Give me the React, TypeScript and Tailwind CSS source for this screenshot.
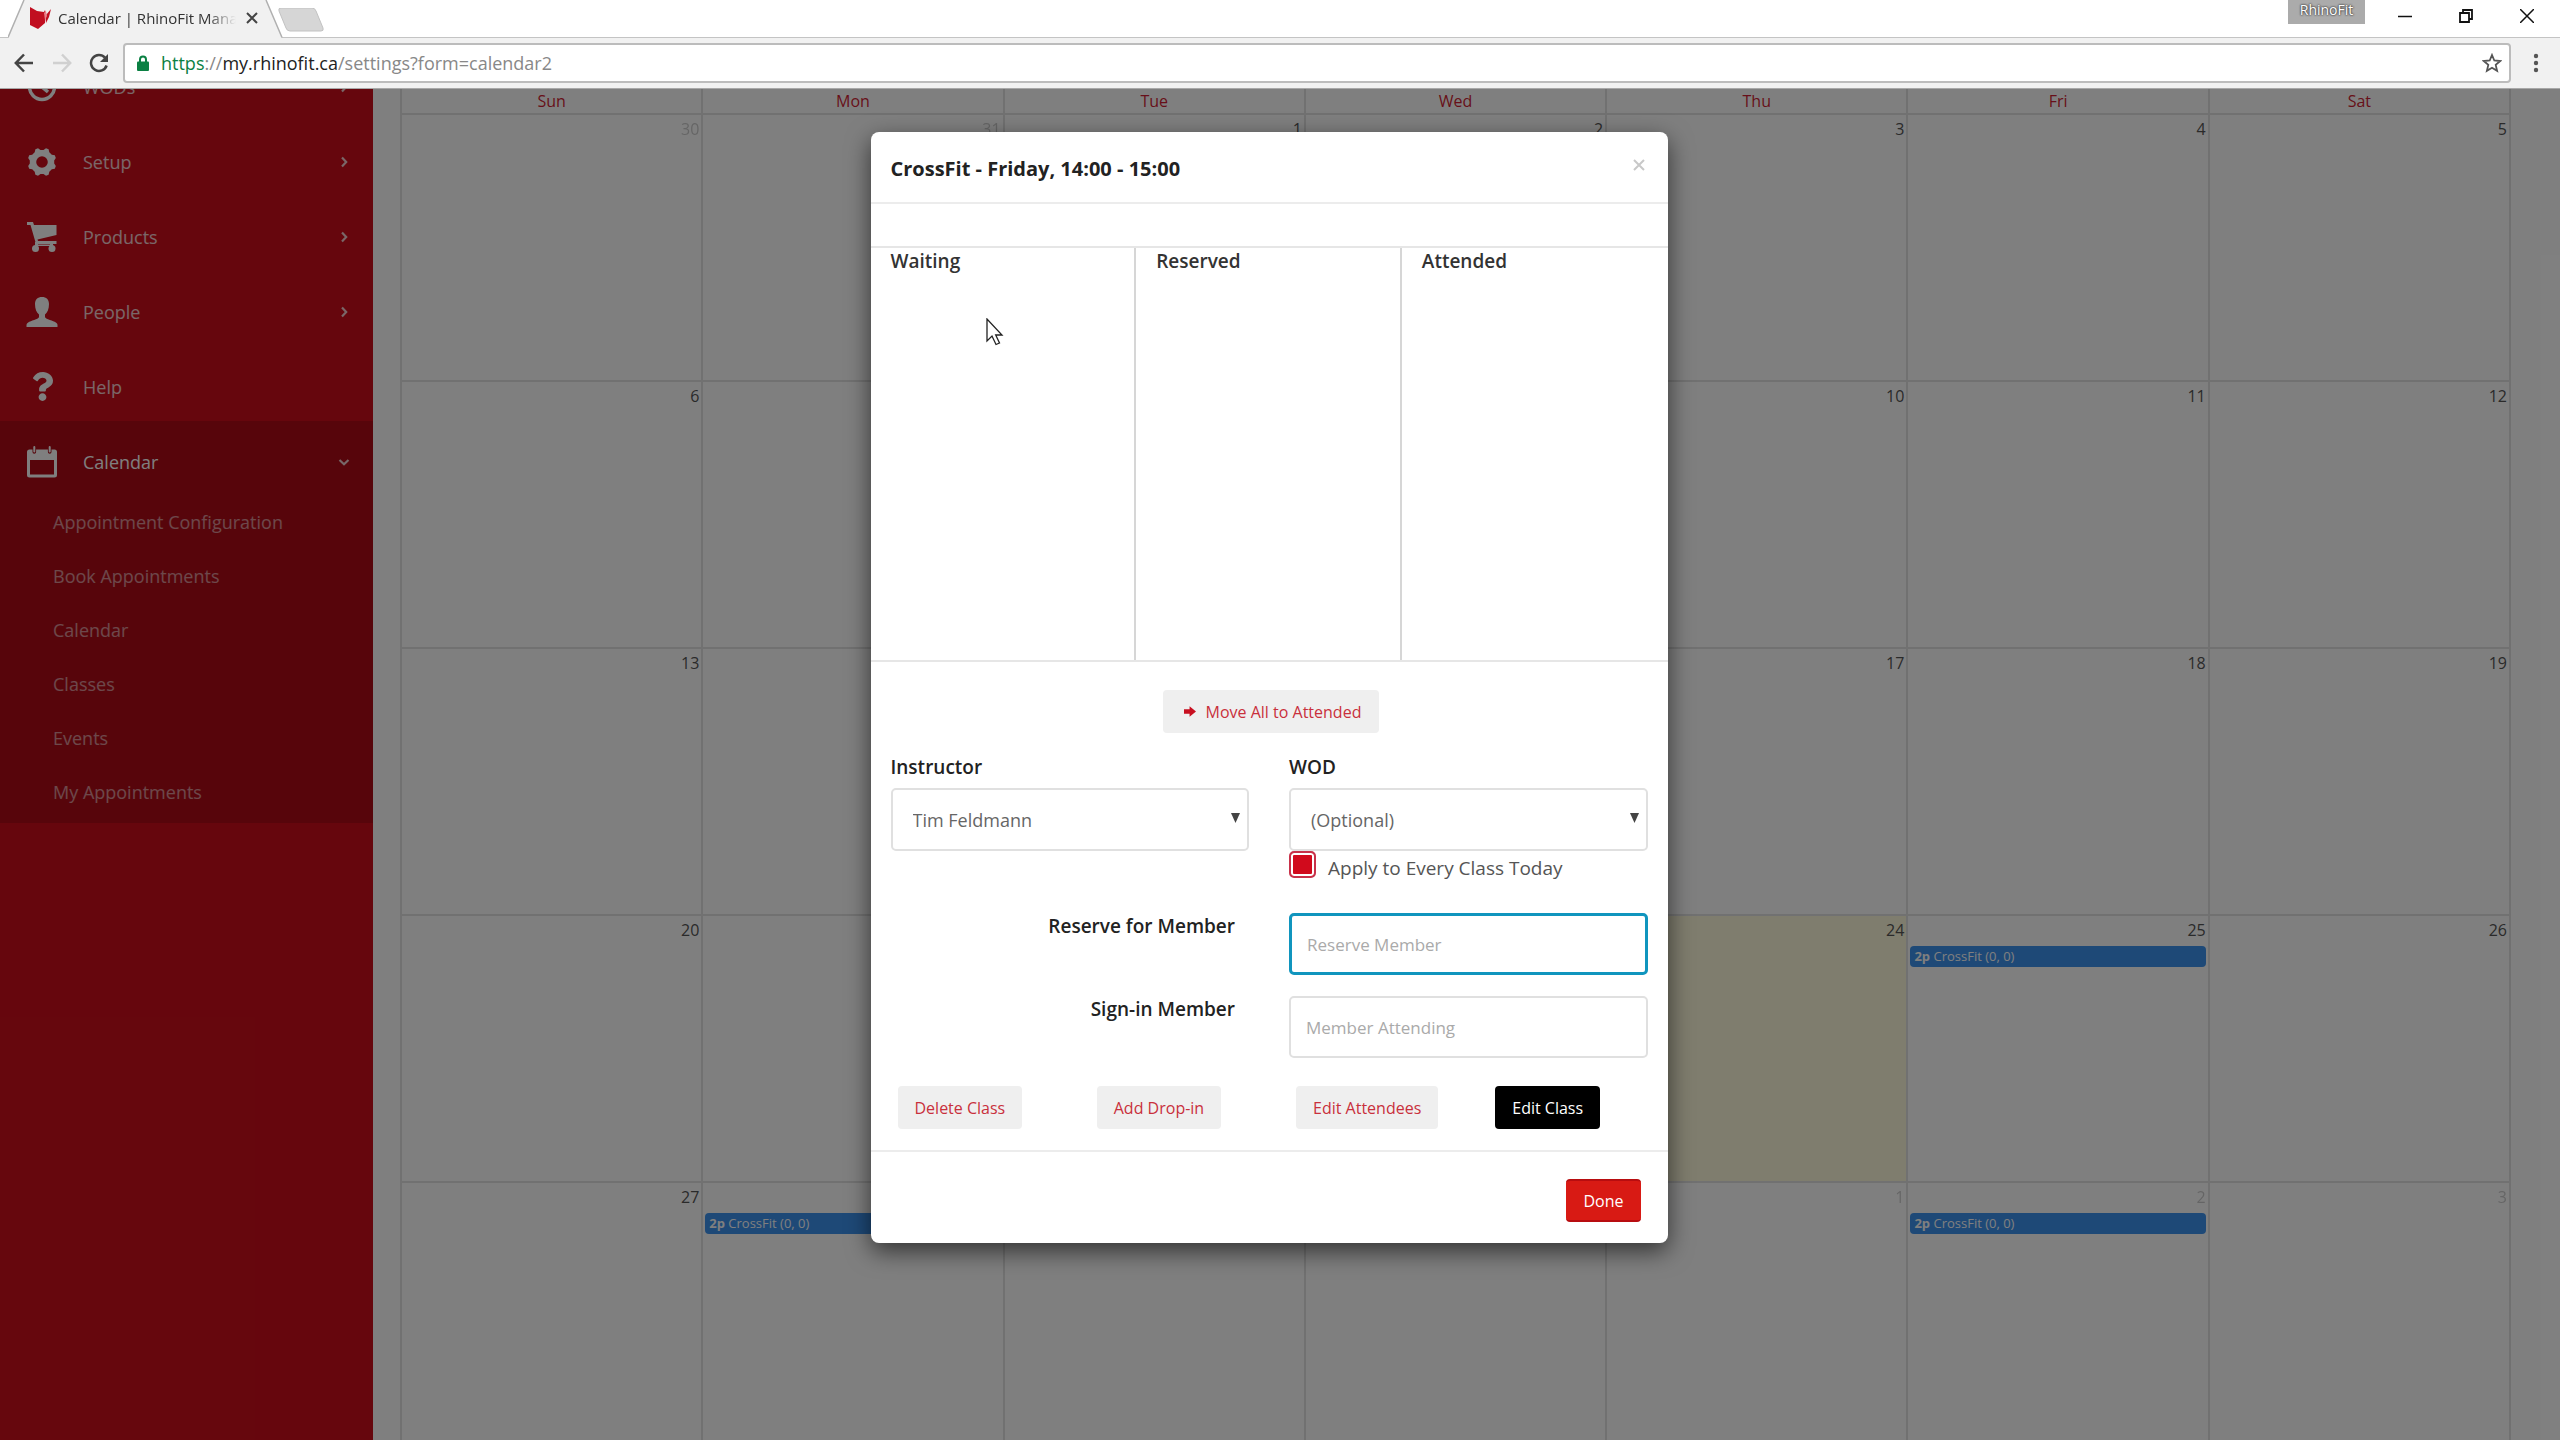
import { FaQuestion } from 'react-icons/fa';

type NavItem = { label: string; icon: React.ReactNode; arrow?: boolean };

const navItems: NavItem[] = [
  { label: 'WODs', icon: <ClockIcon />, arrow: true },
  { label: 'Setup', icon: <CogIcon />, arrow: true },
  { label: 'Products', icon: <CartIcon />, arrow: true },
  { label: 'People', icon: <UserIcon />, arrow: true },
  { label: 'Help', icon: <FaQuestion size={29} /> },
];

const calendarLinks = [
  'Appointment Configuration',
  'Book Appointments',
  'Calendar',
  'Classes',
  'Events',
  'My Appointments',
];

const weekdays = ['Sun', 'Mon', 'Tue', 'Wed', 'Thu', 'Fri', 'Sat'];

type Day = { n: number; other?: boolean; today?: boolean; event?: boolean };

const weeks: Day[][] = [
  [{ n: 30, other: true }, { n: 31, other: true }, { n: 1 }, { n: 2 }, { n: 3 }, { n: 4 }, { n: 5 }],
  [{ n: 6 }, { n: 7 }, { n: 8 }, { n: 9 }, { n: 10 }, { n: 11 }, { n: 12 }],
  [{ n: 13 }, { n: 14 }, { n: 15 }, { n: 16 }, { n: 17 }, { n: 18 }, { n: 19 }],
  [{ n: 20 }, { n: 21 }, { n: 22 }, { n: 23 }, { n: 24, today: true }, { n: 25, event: true }, { n: 26 }],
  [
    { n: 27 },
    { n: 28, event: true },
    { n: 29 },
    { n: 30 },
    { n: 1, other: true },
    { n: 2, other: true, event: true },
    { n: 3, other: true },
  ],
];

function ClockIcon() {
  return (
    <svg width="30" height="30" viewBox="0 0 30 30" fill="none" stroke="currentColor" strokeWidth="3.5">
      <circle cx="15" cy="15" r="12.5" />
      <path d="M15 6v9l6 5" />
    </svg>
  );
}

function CogIcon() {
  return (
    <svg width="30" height="30" viewBox="0 0 30 30" fill="currentColor">
      <path
        fillRule="evenodd"
        d="M11 1.300L13.500 3h3L19 1.300l2.600 1L22.300 5.200 24.800 7.700l3 .6 1 2.700L27.200 13.500v3L28.800 19l-1 2.700-3 .6-2.500 2.500-.7 2.900-2.600 1L16.500 27h-3L11 28.700l-2.600-1-.7-2.900-2.500-2.500-3-.6-1-2.700 1.600-2.500v-3L1.200 11l1-2.700 3-.6 2.500-2.500.7-2.900zM15 9.200a5.800 5.800 0 1 0 0 11.600 5.800 5.800 0 0 0 0-11.600z"
      />
    </svg>
  );
}

function CartIcon() {
  return (
    <svg width="32" height="32" viewBox="0 0 32 32" fill="currentColor">
      <path d="M1 1h6l1 3h22.500v10L11.500 18.500l.5 1.500h18.500v3H10L4.500 4H1z" />
      <path d="M9 21h3v4H9zM24 21h3v4h-3zM10 23.500h16v1.500H10z" />
      <circle cx="9.500" cy="27.500" r="3.500" />
      <circle cx="26" cy="27.500" r="3.500" />
    </svg>
  );
}

function UserIcon() {
  return (
    <svg width="32" height="30" viewBox="0 0 32 30" fill="currentColor">
      <path d="M16 0c-4.300 0-7 2.500-7 7 0 5 1.600 8.600 4 10.500v2.200c0 1-1 1.700-3 2.500C5 24 .5 25.200.5 28v2h31v-2c0-2.800-4.500-4-9.500-5.800-2-.8-3-1.500-3-2.500v-2.200C21.400 15.600 23 12 23 7c0-4.500-2.700-7-7-7z" />
    </svg>
  );
}

function CalendarIcon() {
  return (
    <svg width="30" height="32" viewBox="0 0 30 32" fill="currentColor">
      <path
        fillRule="evenodd"
        d="M2.500 3.500H5.500V6a1.800 1.800 0 0 0 3.600 0V3.500h11.800V6a1.800 1.800 0 0 0 3.600 0V3.500h3A2.500 2.500 0 0 1 30 6v23a2.500 2.500 0 0 1-2.500 2.500h-25A2.500 2.500 0 0 1 0 29V6a2.500 2.500 0 0 1 2.500-2.500zM3 14v14.500h24V14z"
      />
      <rect x="6.300" y="0" width="2" height="6.500" rx="1" />
      <rect x="21.700" y="0" width="2" height="6.500" rx="1" />
    </svg>
  );
}

function Chevron({ down }: { down?: boolean }) {
  return (
    <svg width="12" height="12" viewBox="0 0 12 12" fill="none" stroke="currentColor" strokeOpacity="0.8" strokeWidth="2.200">
      <path d={down ? 'M1.500 4l4.500 4.200L10.500 4' : 'M4 1.500L8.200 6 4 10.500'} />
    </svg>
  );
}

function BrowserBar() {
  return (
    <header className="relative z-10 border-b border-[#a8a8a8] bg-[#f1f1f1] text-[#333]">
      <div className="flex h-[38px] items-start border-b border-[#c4c4c4] bg-white pl-2">
        <div className="relative h-[38px] w-[276px]">
          <svg className="absolute inset-0" width="276" height="38" viewBox="0 0 276 38">
            <path d="M0 38L16 0h242l16 38z" fill="#f1f1f1" />
            <path d="M0 37.500L16 0M258 0l16 37.500" fill="none" stroke="#b0b0b0" strokeWidth="1.500" />
          </svg>
          <div className="relative flex h-9 items-center pl-[21px]">
            <svg width="22" height="22" viewBox="0 0 22 22">
              <path d="M1 0l7 4 7 1 1-2 1 4-1 9-7 6-8-4z" fill="#c10e20" />
              <path d="M17 8l5-6-2 8-3 6z" fill="#c10e20" />
              <path d="M15 6l2-2 1 5-2 4z" fill="#e9808a" />
            </svg>
            <span className="ml-[7px] w-[178px] text-[15px] whitespace-nowrap [mask-image:linear-gradient(90deg,#000_84%,transparent)]">
              Calendar | RhinoFit Mana
            </span>
            <button aria-label="Close tab" className="ml-[10px]">
              <svg width="12" height="12" viewBox="0 0 12 12" stroke="#444" strokeWidth="2">
                <path d="M1 1l10 10M11 1L1 11" />
              </svg>
            </button>
          </div>
        </div>
        <button aria-label="New tab" className="mt-2 -ml-[6px]">
          <svg width="46" height="24" viewBox="0 0 46 24">
            <path d="M3 0h31q3 0 4 3l7 17q1 3-2 3H12q-3 0-4-3L1 3q-1-3 2-3z" fill="#d6d6d6" stroke="#c2c2c2" />
          </svg>
        </button>
        <div className="ml-auto flex items-start">
          <span className="flex h-6 w-[77px] items-center justify-center bg-[#ababab] pb-1 text-sm leading-5 text-white [text-shadow:0_0_2px_#333,0_0_2px_#333]">
            RhinoFit
          </span>
          <div className="flex h-8 items-center gap-[47px] pr-[26px] pl-[33px]">
            <button aria-label="Minimize">
              <svg width="14" height="14" viewBox="0 0 14 14" stroke="#111" strokeWidth="1.500">
                <path d="M0 7.500h14" />
              </svg>
            </button>
            <button aria-label="Restore">
              <svg width="14" height="14" viewBox="0 0 14 14" fill="none" stroke="#111" strokeWidth="1.800">
                <path d="M1 4h9v9H1zM4 4V1h9v9h-3" />
              </svg>
            </button>
            <button aria-label="Close">
              <svg width="14" height="14" viewBox="0 0 14 14" stroke="#111" strokeWidth="1.500">
                <path d="M0 0l14 14M14 0L0 14" />
              </svg>
            </button>
          </div>
        </div>
      </div>
      <div className="flex h-[50px] items-center pl-[14px]">
        <button aria-label="Back">
          <svg width="20" height="20" viewBox="0 0 20 20" fill="none" stroke="#444" strokeWidth="2.500">
            <path d="M19 10H2M10 1.500L1.800 10l8.200 8.500" />
          </svg>
        </button>
        <button aria-label="Forward" className="ml-[18px]">
          <svg width="20" height="20" viewBox="0 0 20 20" fill="none" stroke="#d0d0d0" strokeWidth="2.500">
            <path d="M1 10h17M10 1.500l8.200 8.500-8.200 8.500" />
          </svg>
        </button>
        <button aria-label="Reload" className="ml-[17px]">
          <svg width="20" height="20" viewBox="0 0 20 20" fill="none" stroke="#444" strokeWidth="2.500">
            <path d="M17.600 12.500A8 8 0 1 1 16 4.600" />
            <path d="M19 1v8h-8z" fill="#444" stroke="none" />
          </svg>
        </button>
        <div className="ml-[14px] flex h-10 flex-1 items-center rounded-[4px] border-2 border-[#bcbcbc] bg-white pr-[7px] pl-3">
          <svg width="12" height="16" viewBox="0 0 12 16">
            <path d="M3 8V4.500a3 3 0 0 1 6 0V8" fill="none" stroke="#0b8043" strokeWidth="2" />
            <rect y="6.500" width="12" height="9.500" rx="1" fill="#0b8043" />
          </svg>
          <span className="ml-3 flex-1 text-lg text-[#888]">
            <span className="text-[#0b8043]">https</span>://<span className="text-[#222]">my.rhinofit.ca</span>
            /settings?form=calendar2
          </span>
          <button aria-label="Bookmark">
            <svg width="20" height="20" viewBox="0 0 20 20" fill="none" stroke="#555" strokeWidth="1.800">
              <path d="M10 2l2.300 5.500 5.900.5-4.500 3.900 1.400 5.900L10 14.700l-5.100 3.100 1.400-5.900L1.800 8l5.900-.5z" />
            </svg>
          </button>
        </div>
        <button aria-label="Menu" className="mr-[21px] ml-[22px]">
          <svg width="6" height="20" viewBox="0 0 6 20" fill="#555">
            <circle cx="3" cy="3" r="2.200" />
            <circle cx="3" cy="10" r="2.200" />
            <circle cx="3" cy="17" r="2.200" />
          </svg>
        </button>
      </div>
    </header>
  );
}

function Sidebar() {
  return (
    <nav className="w-[373px] shrink-0 overflow-hidden bg-[#cc0d1a] text-lg text-white">
      <div className="-mt-[43px]">
        {navItems.map((it) => (
          <a key={it.label} href="#" className="flex h-[75px] items-center pt-[6px] pr-[23px] pl-[26px]">
            <span className="flex w-8 justify-center">{it.icon}</span>
            <span className="ml-[25px] flex-1 text-white/80">{it.label}</span>
            {it.arrow && <Chevron />}
          </a>
        ))}
      </div>
      <div className="bg-[#ae0a16] pb-1">
        <a href="#" className="flex h-[74px] items-center pt-[7px] pr-[23px] pl-[26px]">
          <span className="flex w-8 justify-center">
            <CalendarIcon />
          </span>
          <span className="ml-[25px] flex-1">Calendar</span>
          <Chevron down />
        </a>
        {calendarLinks.map((label) => (
          <a key={label} href="#" className="flex h-[54px] items-center pl-[53px] text-white/55">
            {label}
          </a>
        ))}
      </div>
    </nav>
  );
}

function MonthGrid() {
  return (
    <main className="min-w-0 flex-1 pr-[49px] pl-[27px]">
      <table className="w-full table-fixed border-collapse text-base text-[#555]">
        <thead>
          <tr className="h-[25px]">
            {weekdays.map((d) => (
              <th key={d} className="border-2 border-t-0 border-[#e2e2e2] p-0 leading-6 font-normal text-[#d01f34]">
                {d}
              </th>
            ))}
          </tr>
        </thead>
        <tbody>
          {weeks.map((week, w) => (
            <tr key={w} className="h-[267px]">
              {week.map((day, i) => (
                <td
                  key={i}
                  className={`border-2 border-[#e2e2e2] px-[2px] py-0 align-top ${day.today ? 'bg-[#fffbdc]' : ''}`}
                >
                  <div className={`h-[30px] pt-[2px] text-right leading-6 ${day.other ? 'opacity-30' : ''}`}>{day.n}</div>
                  {day.event && (
                    <a
                      href="#"
                      className="block h-[21px] rounded-[4px] bg-[#3c92ee] px-1 text-[13px] leading-5 text-white"
                    >
                      <b>2p</b> CrossFit (0, 0)
                    </a>
                  )}
                </td>
              ))}
            </tr>
          ))}
        </tbody>
      </table>
    </main>
  );
}

function SelectField({ id, label, value }: { id: string; label: string; value: string }) {
  return (
    <div>
      <label htmlFor={id} className="block text-[19px] leading-6 font-semibold text-[#222]">
        {label}
      </label>
      <div className="relative mt-[9px]">
        <select
          id={id}
          className="h-[63px] w-full appearance-none rounded-[5px] border-2 border-[#e0e0e0] bg-white pl-5 text-[#666]"
        >
          <option>{value}</option>
        </select>
        <svg className="pointer-events-none absolute top-[25px] right-[9px]" width="9" height="10" viewBox="0 0 9 10">
          <path d="M0 0h9L4.500 10z" fill="#444" />
        </svg>
      </div>
    </div>
  );
}

const softButton = 'h-[43px] rounded-[4px] bg-[#efefef] px-[17px] text-base text-[#c9303c]';

function ClassDialog() {
  return (
    <div
      role="dialog"
      aria-modal="true"
      aria-labelledby="dialog-title"
      className="mt-[43px] w-[797px] rounded-lg bg-white text-lg shadow-[0_8px_24px_rgba(0,0,0,0.6)]"
    >
      <div className="flex h-[72px] items-center border-b-2 border-[#ececec] px-5">
        <h2 id="dialog-title" className="flex-1 pt-[3px] text-xl font-bold text-[#222]">
          CrossFit - Friday, 14:00 - 15:00
        </h2>
        <button aria-label="Close" className="mr-[3px] pb-1">
          <svg width="12" height="12" viewBox="0 0 12 12" stroke="#c8c8c8" strokeWidth="2">
            <path d="M1 1l10 10M11 1L1 11" />
          </svg>
        </button>
      </div>

      <div className="mt-[42px] grid h-[416px] grid-cols-3 divide-x-2 divide-[#d6d6d6] border-y-2 border-[#e6e6e6]">
        {['Waiting', 'Reserved', 'Attended'].map((t) => (
          <h3 key={t} className="px-5 text-[19px] leading-[26px] font-semibold text-[#333]">
            {t}
          </h3>
        ))}
      </div>

      <div className="mt-7 flex justify-center pl-1">
        <button className="flex h-[43px] items-center rounded-[4px] bg-[#efefef] pr-[18px] pl-[21px] text-base text-[#c9303c]">
          <svg className="mr-[10px]" width="12" height="11" viewBox="0 0 14 12" fill="#c80f20">
            <path d="M0 3.500h6.500V0L14 6l-7.500 6V8.500H0z" />
          </svg>
          Move All to Attended
        </button>
      </div>

      <div className="mt-[22px] grid grid-cols-2 gap-x-10 px-5">
        <SelectField id="instructor" label="Instructor" value="Tim Feldmann" />
        <div>
          <SelectField id="wod" label="WOD" value="(Optional)" />
          <label className="flex h-9 items-start gap-3 text-[19px] text-[#555]">
            <input
              type="checkbox"
              defaultChecked
              className="size-[27px] appearance-none rounded-[5px] border-2 border-[#c8324a] bg-white checked:bg-[#d10a1c] checked:shadow-[inset_0_0_0_2px_#fff]"
            />
            <span className="pt-[3px]">Apply to Every Class Today</span>
          </label>
        </div>
      </div>

      <div className="mt-[26px] grid grid-cols-2 gap-x-10 gap-y-[21px] px-5">
        <label htmlFor="reserve" className="pr-[14px] text-right text-[19px] leading-[26px] font-semibold text-[#222]">
          Reserve for Member
        </label>
        <input
          id="reserve"
          placeholder="Reserve Member"
          className="h-[62px] w-full rounded-[5px] border-3 border-[#1095be] px-[15px] text-[17px] outline-none placeholder:text-[#aaa]"
        />
        <label htmlFor="signin" className="pr-[14px] text-right text-[19px] leading-[26px] font-semibold text-[#222]">
          Sign-in Member
        </label>
        <input
          id="signin"
          placeholder="Member Attending"
          className="h-[62px] w-full rounded-[5px] border-2 border-[#e0e0e0] px-[15px] text-[17px] outline-none placeholder:text-[#aaa]"
        />
      </div>

      <div className="mt-7 grid grid-cols-4 pb-[21px] *:ml-[27px] *:justify-self-start">
        <button className={softButton}>Delete Class</button>
        <button className={softButton}>Add Drop-in</button>
        <button className={softButton}>Edit Attendees</button>
        <button className="h-[43px] rounded-[4px] bg-black px-[17px] text-base text-white">Edit Class</button>
      </div>

      <div className="flex justify-end border-t-2 border-[#ececec] px-[27px] pt-[27px] pb-[21px]">
        <button className="h-[43px] rounded-[4px] border-y-2 border-[#b80d10] bg-[#d81a14] px-[17px] text-base text-white">
          Done
        </button>
      </div>
    </div>
  );
}

export default function App() {
  return (
    <div className="flex h-screen flex-col overflow-hidden font-['Open_Sans','Noto_Sans',sans-serif]">
      <BrowserBar />
      <div className="relative flex min-h-0 flex-1 overflow-hidden bg-white">
        <Sidebar />
        <MonthGrid />
        <div className="absolute inset-0 flex items-start justify-center bg-black/50 pr-[22px]">
          <ClassDialog />
        </div>
      </div>
      {/* mouse pointer */}
      <svg className="pointer-events-none absolute top-[318px] left-[986px] z-20" width="18" height="28" viewBox="0 0 18 28">
        <path d="M1 1v22l5-5 4 8.500 3.500-1.500L9.700 17H16z" fill="#fff" stroke="#222" strokeWidth="1.300" />
      </svg>
    </div>
  );
}
